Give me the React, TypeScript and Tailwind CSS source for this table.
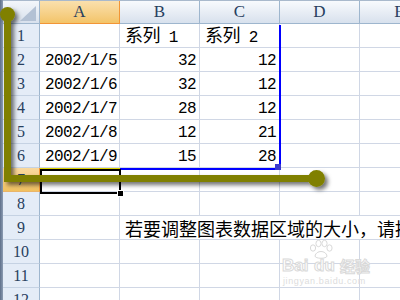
import React from "react";

const rows: { n: number; a?: string; b?: React.ReactNode; c?: React.ReactNode }[] = [
  { n: 1, b: "系列|1", c: "系列|2" },
  { n: 2, a: "2002/1/5", b: "32", c: "12" },
  { n: 3, a: "2002/1/6", b: "32", c: "12" },
  { n: 4, a: "2002/1/7", b: "28", c: "12" },
  { n: 5, a: "2002/1/8", b: "12", c: "21" },
  { n: 6, a: "2002/1/9", b: "15", c: "28" },
  { n: 7 },
  { n: 8 },
  { n: 9 },
  { n: 10 },
  { n: 11 },
  { n: 12 },
];

function Series({ s }: { s: string }) {
  const [cjk, num] = s.split("|");
  return (
    <span className="whitespace-pre">
      <span className="text-[18px]">{cjk}</span>
      <span> {num}</span>
    </span>
  );
}

function RowHead({ n }: { n: number }) {
  const active = n === 7;
  return (
    <div
      className={
        "w-[37px] h-[24px] shrink-0 border-r border-b flex items-center justify-center text-[16px] text-[#27405e] [font-family:'Liberation_Serif',serif] " +
        (active
          ? "bg-gradient-to-b from-[#f9d99f] to-[#f1c15f] border-r-[#f29536] border-b-[#e9b56a]"
          : "bg-[#e4ecf7] border-r-[#9eb6ce] border-b-[#c5d2e3]")
      }
    >
      {n}
    </div>
  );
}

function Cell({
  children,
  right,
  w = "w-[80px]",
}: {
  children?: React.ReactNode;
  right?: boolean;
  w?: string;
}) {
  return (
    <div
      className={
        w +
        " h-[24px] shrink-0 border-r border-b border-[#d0d7e5] flex items-center pt-[3px] whitespace-nowrap text-black text-[16px] tracking-[-0.6px] " +
        (right ? "justify-end pr-[3px]" : "justify-start pl-[5px]")
      }
    >
      {children}
    </div>
  );
}

function ColHead({ l, active, w = "w-[80px]" }: { l: string; active?: boolean; w?: string }) {
  return (
    <div
      className={
        w +
        " h-[23px] shrink-0 border-r border-b flex items-center justify-center text-[17px] text-[#27405e] [font-family:'Liberation_Serif',serif] " +
        (active
          ? "bg-gradient-to-b from-[#fae0ad] to-[#f3c468] border-r-[#f29536] border-b-[#f29536]"
          : "bg-gradient-to-b from-[#f8fafd] to-[#d8e1ed] border-r-[#9eb6ce] border-b-[#9eb6ce]")
      }
    >
      {l}
    </div>
  );
}

const wm =
  "absolute font-bold leading-none text-white [-webkit-text-stroke:1px_#d9d9d9]";

export default function App() {
  return (
    <div className="relative w-[400px] h-[300px] overflow-hidden bg-white flex [font-family:'Liberation_Mono','Noto_Sans_CJK_SC',monospace]">
      <div className="w-[3px] shrink-0 bg-gradient-to-r from-[#5f708a] to-[#8d9db3]" />
      <div className="flex flex-col flex-1 min-w-0">
        <div className="h-[2px] bg-[#f2f4f8] border-b border-[#a9b9cc] box-content" />
        <div className="flex">
          <div className="relative w-[37px] h-[23px] shrink-0 border-r border-b border-[#9eb6ce] bg-gradient-to-b from-[#f3f6fa] to-[#d8e1ed]">
            <svg className="absolute right-[3px] bottom-[2px]" width="16" height="15" viewBox="0 0 16 15">
              <polygon points="16,0 16,15 0,15" fill="#b3c1d4" />
            </svg>
          </div>
          <ColHead l="A" active />
          <ColHead l="B" />
          <ColHead l="C" />
          <ColHead l="D" />
          <ColHead l="E" />
        </div>
        {rows.map((r) => (
          <div key={r.n} className="flex">
            <RowHead n={r.n} />
            <Cell>{r.a}</Cell>
            {r.n === 9 ? (
              <div className="h-[24px] flex-1 border-b border-[#d0d7e5] flex items-center pl-[5px] pt-[2px] whitespace-nowrap text-black text-[18px] [font-family:'Noto_Sans_CJK_SC',sans-serif]">
                若要调整图表数据区域的大小，请拖动
              </div>
            ) : (
              <>
                <Cell right={r.n !== 1}>
                  {typeof r.b === "string" && r.b.includes("|") ? <Series s={r.b} /> : r.b}
                </Cell>
                <Cell right={r.n !== 1}>
                  {typeof r.c === "string" && r.c.includes("|") ? <Series s={r.c} /> : r.c}
                </Cell>
                <Cell />
                <Cell />
              </>
            )}
          </div>
        ))}
      </div>

      {/* chart data range outline */}
      <div className="absolute left-[279px] top-[25px] w-[2px] h-[145px] bg-[#0000ff]" />
      <div className="absolute left-[120px] top-[168px] w-[161px] h-[2px] bg-[#0000ff]" />
      <div className="absolute left-[275px] top-[164px] w-[6px] h-[6px] bg-[#3a3acc]" />
      <div className="absolute left-[40px] top-[168px] w-[80px] h-[1px] bg-[#e0d400]" />

      {/* selected cell A7 */}
      <div className="absolute left-[40px] top-[169px] w-[81px] h-[25px] border-2 border-black" />
      <div className="absolute left-[117px] top-[190px] w-[5px] h-[5px] bg-black border border-white box-content" />

      {/* watermark */}
      <div className="absolute left-[282px] top-[240px] w-[100px] h-[50px] pointer-events-none">
        <svg className="absolute left-[27px] top-0" width="24" height="19" viewBox="0 0 24 19">
          <g fill="#fff" stroke="#d9d9d9" strokeWidth="1">
            <ellipse cx="4" cy="8" rx="2.6" ry="3.2" />
            <ellipse cx="9.5" cy="3.5" rx="2.6" ry="3.2" />
            <ellipse cx="15.5" cy="3.5" rx="2.6" ry="3.2" />
            <ellipse cx="20.5" cy="8" rx="2.6" ry="3.2" />
            <path d="M6 16 C7 10 17 10 18 16 C18 19 6 19 6 16 Z" />
          </g>
        </svg>
        <span className={wm + " left-0 top-[17px] text-[17px] [font-family:'Liberation_Sans',sans-serif]"}>Bai</span>
        <span className={wm + " left-[32px] top-[17px] text-[17px] [font-family:'Liberation_Sans',sans-serif]"}>du</span>
        <span className={wm + " left-[58px] top-[18px] text-[15px] [font-family:'Noto_Sans_CJK_SC',sans-serif]"}>经验</span>
        <span className="absolute left-[1px] top-[37px] text-[9px] leading-none text-[#dddddd] tracking-[0.6px] [font-family:'Liberation_Sans',sans-serif]">
          jingyan.baidu.com
        </span>
      </div>

      {/* olive bracket annotation */}
      <svg className="absolute left-0 top-0 pointer-events-none" width="400" height="300" viewBox="0 0 400 300">
        <defs>
          <filter id="sh" x="-20%" y="-20%" width="140%" height="140%">
            <feDropShadow dx="3" dy="3" stdDeviation="2" floodColor="#000" floodOpacity="0.55" />
          </filter>
        </defs>
        <g filter="url(#sh)" fill="#808000" stroke="#808000">
          <path d="M7.5 14.5 V178.5 H316" fill="none" strokeWidth="7" strokeLinejoin="miter" />
          <circle cx="7.5" cy="14.5" r="7.5" stroke="none" />
          <circle cx="316.5" cy="178.5" r="8.5" stroke="none" />
        </g>
      </svg>
    </div>
  );
}
